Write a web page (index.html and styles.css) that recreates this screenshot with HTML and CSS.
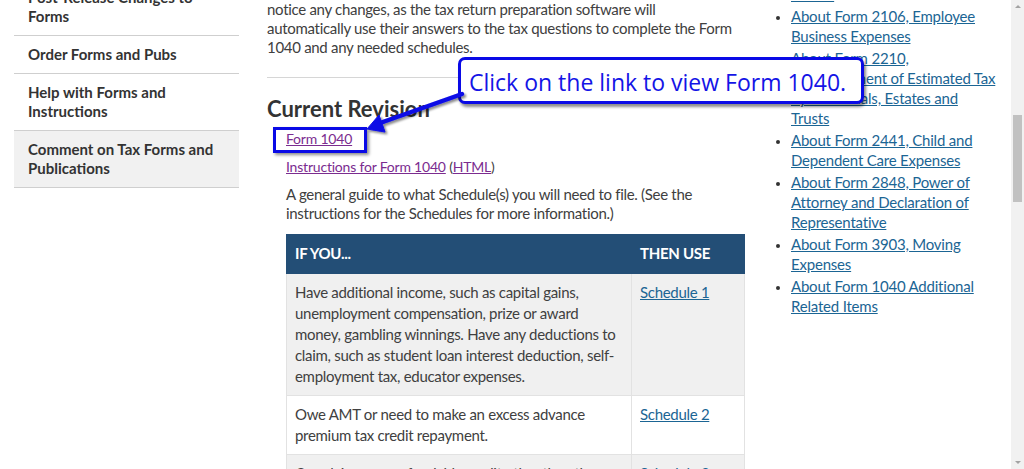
FILE: index.html
```html
<!DOCTYPE html>
<html lang="en">
<head>
<meta charset="utf-8">
<title>About Form 1040</title>
<link rel="stylesheet" href="styles.css">
</head>
<body>
<div class="viewport">
  <div class="page">
    <aside class="sidebar">
      <ul class="side-nav">
        <li><a href="#">Post-Release Changes to<br>Forms</a></li>
        <li><a href="#">Order Forms and Pubs</a></li>
        <li><a href="#">Help with Forms and<br>Instructions</a></li>
        <li class="active"><a href="#">Comment on Tax Forms and<br>Publications</a></li>
      </ul>
    </aside>

    <main class="main">
      <p class="intro">Taxpayers who file their returns electronically will not<br>notice any changes, as the tax return preparation software will<br>automatically use their answers to the tax questions to complete the Form<br>1040 and any needed schedules.</p>
      <hr class="rule">
      <h2 class="section-title">Current Revision</h2>
      <div class="links">
        <p class="link-line"><a class="visited" href="#">Form 1040</a></p>
        <p class="link-line"><a class="visited" href="#">Instructions for Form 1040</a> (<a class="visited" href="#">HTML</a>)</p>
        <p class="guide">A general guide to what Schedule(s) you will need to file. (See the<br>instructions for the Schedules for more information.)</p>
        <table class="sched">
          <thead>
            <tr><th class="c1">IF YOU...</th><th class="c2">THEN USE</th></tr>
          </thead>
          <tbody>
            <tr class="odd">
              <td class="c1">Have additional income, such as capital gains,<br>unemployment compensation, prize or award<br>money, gambling winnings. Have any deductions to<br>claim, such as student loan interest deduction, self-<br>employment tax, educator expenses.</td>
              <td class="c2"><a href="#">Schedule 1</a></td>
            </tr>
            <tr>
              <td class="c1">Owe AMT or need to make an excess advance<br>premium tax credit repayment.</td>
              <td class="c2"><a href="#">Schedule 2</a></td>
            </tr>
            <tr class="odd">
              <td class="c1">Can claim a nonrefundable credit other than the<br>child tax credit or the credit for other dependents.</td>
              <td class="c2"><a href="#">Schedule 3</a></td>
            </tr>
          </tbody>
        </table>
      </div>
    </main>

    <aside class="related">
      <ul class="rel-list">
        <li><a href="#">About Form 1040-X, Amended<br>Return</a></li>
        <li><a href="#">About Form 2106, Employee<br>Business Expenses</a></li>
        <li><a href="#">About Form 2210,<br>Underpayment of Estimated Tax<br>by Individuals, Estates and<br>Trusts</a></li>
        <li><a href="#">About Form 2441, Child and<br>Dependent Care Expenses</a></li>
        <li><a href="#">About Form 2848, Power of<br>Attorney and Declaration of<br>Representative</a></li>
        <li><a href="#">About Form 3903, Moving<br>Expenses</a></li>
        <li><a href="#">About Form 1040 Additional<br>Related Items</a></li>
      </ul>
    </aside>
  </div>

  <div class="scrollbar">
    <span class="sb-up"></span>
    <span class="sb-track"><span class="sb-thumb"></span></span>
    <span class="sb-down"></span>
  </div>
</div>

<div class="callout">Click on the link to view Form 1040.</div>
<div class="highlight"></div>
<svg class="arrow" width="1024" height="469" viewBox="0 0 1024 469">
  <defs>
    <filter id="sh" x="-20%" y="-20%" width="140%" height="140%">
      <feDropShadow dx="2" dy="2" stdDeviation="1.2" flood-color="#000" flood-opacity="0.45"/>
    </filter>
  </defs>
  <g filter="url(#sh)" fill="#0a0ae6" stroke="#0a0ae6">
    <line x1="462" y1="94" x2="380" y2="123" stroke-width="4.5" stroke-linecap="round"/>
    <polygon points="367,129 379,115 385,132" stroke-width="1" stroke-linejoin="round"/>
  </g>
</svg>
</body>
</html>
```

FILE: styles.css
```css
html, body {
  margin: 0;
  padding: 0;
  background: #fff;
}
body {
  width: 1024px;
  height: 469px;
  overflow: hidden;
  position: relative;
  font-family: Lato, "Open Sans", sans-serif;
  color: #404040;
}
a { color: #1b6594; }
.viewport {
  display: flex;
  height: 469px;
}
.page {
  flex: 1;
  display: flex;
  align-items: flex-start;
  overflow: hidden;
}

/* ---------- left nav ---------- */
.sidebar {
  width: 225px;
  margin-left: 14px;
  margin-top: -21px;
  flex: none;
}
.side-nav {
  list-style: none;
  margin: 0;
  padding: 0;
}
.side-nav li {
  border-bottom: 1px solid #cfcfcf;
  padding: 9px 14px;
}
.side-nav li.active { background: #f1f1f1; }
.side-nav a {
  color: #333;
  text-decoration: none;
  font-weight: 700;
  font-size: 15px;
  line-height: 19px;
  display: block;
}

/* ---------- main ---------- */
.main {
  width: 478px;
  margin-left: 28px;
  margin-top: -19px;
  flex: none;
  font-size: 15px;
  letter-spacing: -0.3px;
  white-space: nowrap;
}
.intro {
  margin: 0;
  line-height: 19px;
}
.rule {
  border: 0;
  border-top: 1px solid #d6d6d6;
  margin: 20px 0 0;
}
.section-title {
  margin: 17px 0 0;
  font-size: 22px;
  line-height: 28px;
  font-weight: 700;
  color: #333;
  letter-spacing: 0;
}
.links {
  padding-left: 19px;
  margin-top: 6px;
}
.links p {
  margin: 0 0 9px;
  line-height: 19px;
}
.links p.link-line {
  font-size: 14px;
  letter-spacing: -0.2px;
}
.links a.visited { color: #7b2c8f; }
.links p.guide { margin-bottom: 11px; }

.sched {
  border-collapse: collapse;
  width: 459px;
  font-size: 15px;
}
.sched th {
  background: #234e76;
  color: #fff;
  text-align: left;
  font-weight: 700;
  padding: 9px 8px 10px;
  line-height: 19px;
  border: 1px solid #234e76;
}
.sched td {
  vertical-align: top;
  padding: 8px 8px 8px;
  line-height: 21px;
  border: 1px solid #e2e2e2;
}
.sched tr.odd td { background: #f0f0f0; }
.sched .c1 { width: 328px; }
.sched td a { color: #1b6594; }

/* ---------- related ---------- */
.related {
  margin-left: 26px;
  margin-top: -36px;
  flex: none;
  width: 220px;
}
.rel-list {
  margin: 0;
  padding-left: 20px;
  list-style: disc;
  color: #333;
  white-space: nowrap;
}
.rel-list li {
  line-height: 20px;
  margin-bottom: 2px;
  font-size: 15px;
  letter-spacing: -0.2px;
}
.rel-list li::marker { font-size: 12px; }
.rel-list a { color: #1b6594; }

/* ---------- scrollbar ---------- */
.scrollbar {
  width: 13px;
  flex: none;
  background: #f1f1f1;
  display: flex;
  flex-direction: column;
  align-items: center;
}
.sb-up, .sb-down {
  width: 0;
  height: 0;
  border-left: 3px solid transparent;
  border-right: 3px solid transparent;
  margin: 5px 0;
}
.sb-up { border-bottom: 3px solid #a3a3a3; }
.sb-down { border-top: 3px solid #a3a3a3; }
.sb-track {
  flex: 1;
  align-self: stretch;
  display: flex;
  flex-direction: column;
  align-items: center;
}
.sb-thumb {
  margin-top: 102px;
  width: 9px;
  height: 87px;
  background: #c1c1c1;
}

/* ---------- annotation overlay ---------- */
.callout {
  position: absolute;
  left: 458px;
  top: 57px;
  width: 392px;
  height: 41px;
  border: 3px solid #0a0ae6;
  border-radius: 7px;
  background: #fff;
  box-shadow: 2px 3px 3px rgba(0,0,0,0.45);
  color: #1414e6;
  font-family: "Open Sans", "Noto Sans", sans-serif;
  font-size: 23px;
  line-height: 44px;
  padding-left: 8px;
  box-sizing: content-box;
  white-space: nowrap;
}
.highlight {
  position: absolute;
  left: 273px;
  top: 127px;
  width: 88px;
  height: 20px;
  border: 3px solid #0a0ae6;
  box-shadow: 2px 2px 3px rgba(0,0,0,0.45);
}
.arrow {
  position: absolute;
  left: 0;
  top: 0;
  pointer-events: none;
}
```
